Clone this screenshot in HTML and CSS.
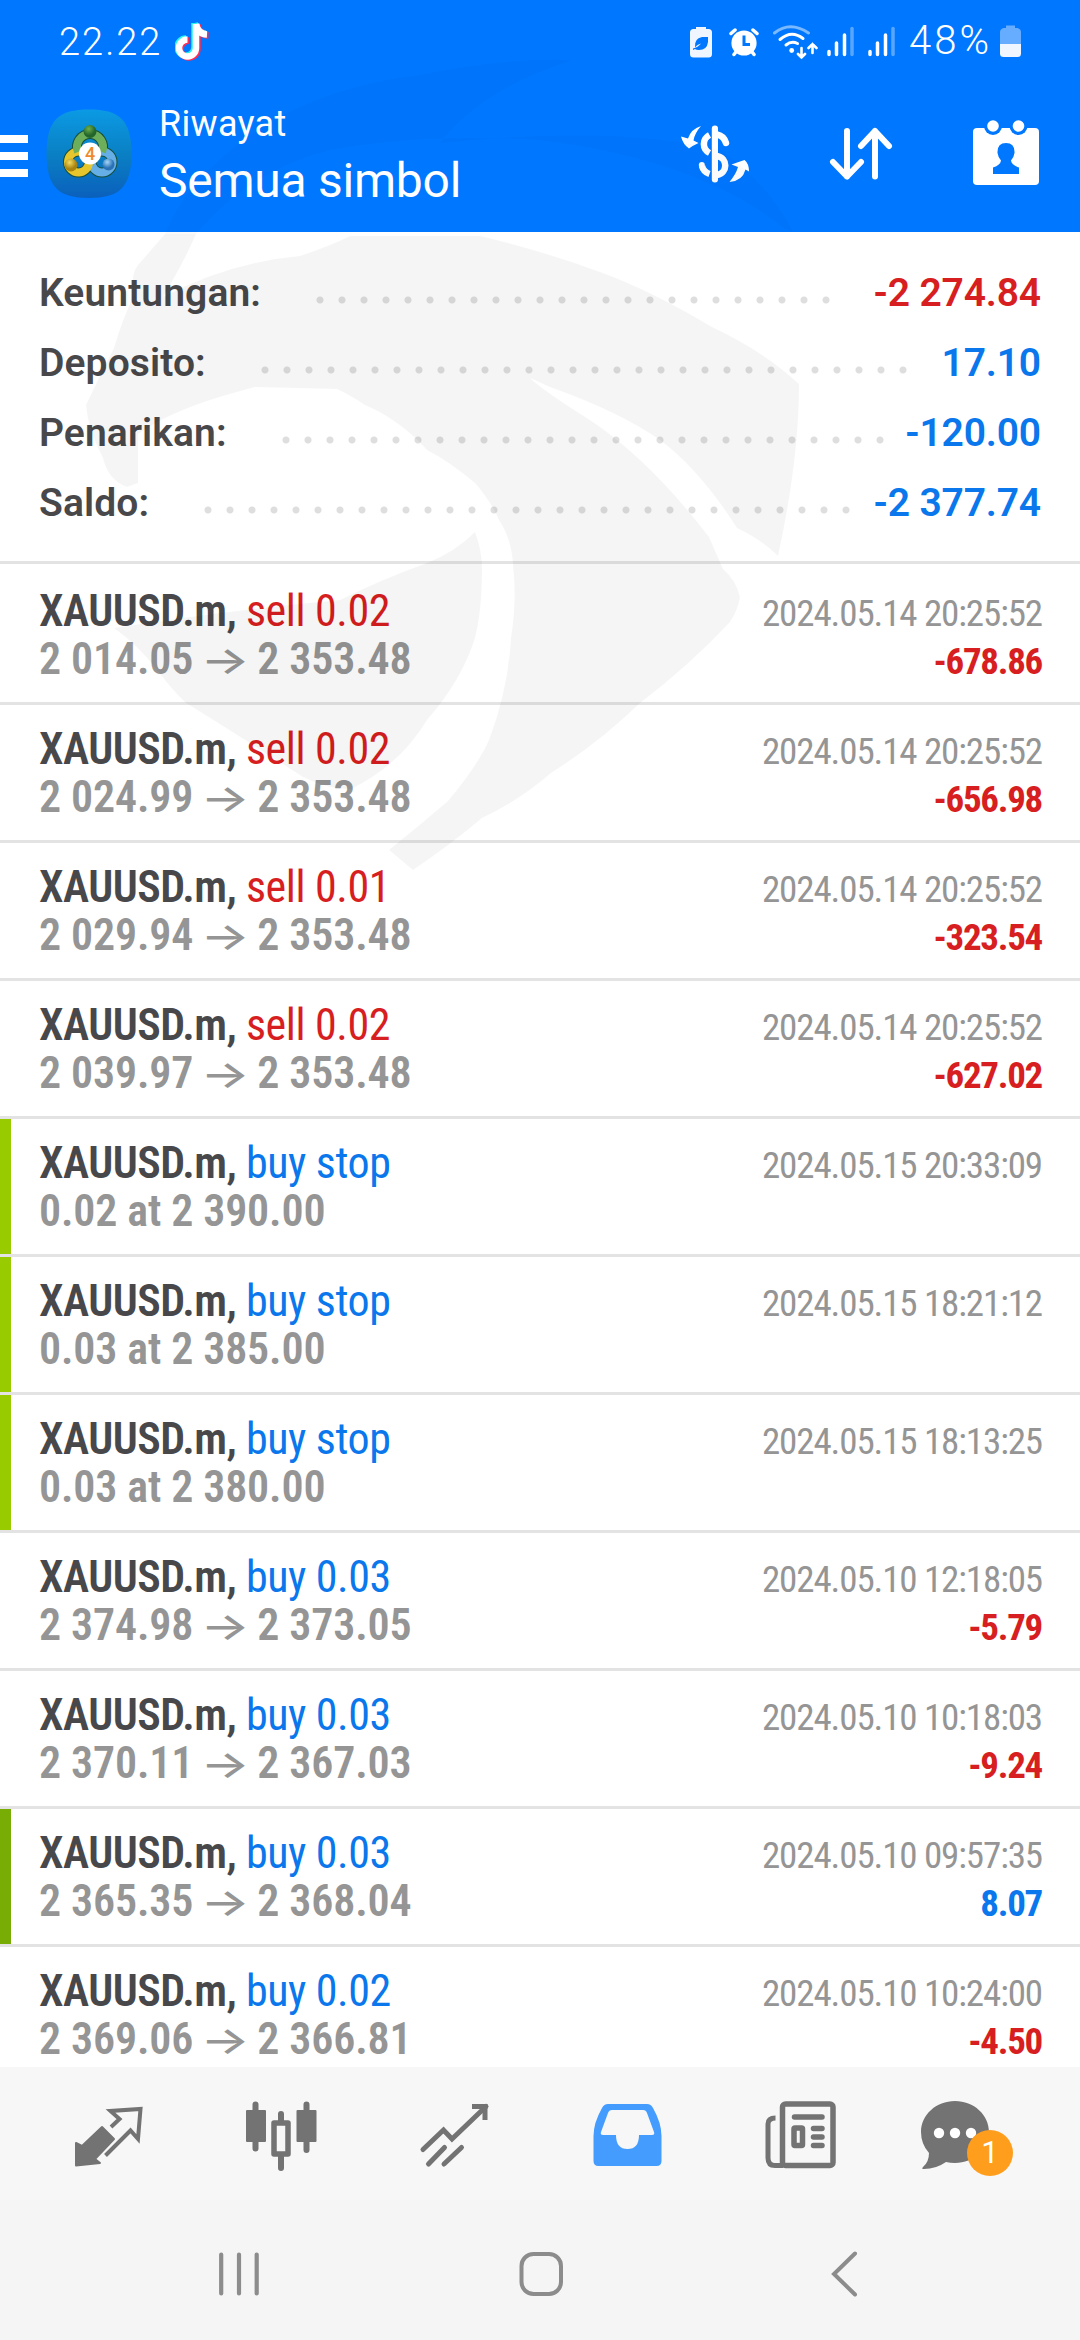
FILE: index.html
```
<!DOCTYPE html>
<html lang="id">
<head>
<meta charset="utf-8">
<title>Riwayat</title>
<link rel="stylesheet" href="styles.css">
</head>
<body>
<div class="screen">
  <header class="header">
    <div class="status">
      <span class="clock">22.22</span>
      <svg class="tiktok" width="34" height="40" viewBox="175 21 34 40" fill="none" stroke-width="6.5">
        <g stroke="#25f4ee" transform="translate(-1.5 -1)"><path d="M196 24V48A8.500 8.500 0 1 1 187.500 39.500"/><path d="M196 24Q198 34 207 34.500"/></g>
        <g stroke="#fe2c55" transform="translate(1.500 1)"><path d="M196 24V48A8.500 8.500 0 1 1 187.500 39.500"/><path d="M196 24Q198 34 207 34.500"/></g>
        <g stroke="#fff"><path d="M196 24V48A8.500 8.500 0 1 1 187.500 39.500"/><path d="M196 24Q198 34 207 34.500"/></g>
      </svg>
      <div class="status-icons">
        <svg width="22" height="34" viewBox="690 24 22 34"><path fill="#f0f6ff" d="M696 29v-2h10v2h2.500q3.500 0 3.500 3.500v21.500q0 3.500-3.500 3.500h-15q-3.500 0-3.500-3.500V32.500q0-3.500 3.500-3.500z"/><path fill="#07f" d="M708 37v5q-1 8-9 8-3 0-4-1l-2 1v-1.500q5-1 8-5-4 1-6 4-1-9 7-10.500z"/></svg>
        <svg class="alarm" width="30" height="34" viewBox="729 24 30 34"><g fill="none" stroke="#fff" stroke-width="3.500" stroke-linecap="round"><path d="M731 33.500l4-3.500M757 33.500l-4-3.500M734 54.500l3-4M754 54.500l-3-4"/></g><circle cx="744" cy="43" r="12.600" fill="#fff"/><path d="M744 35.500v9h6" fill="none" stroke="#07f" stroke-width="3"/></svg>
        <svg class="wifi" width="45" height="36" viewBox="773 24 45 36" fill="none" stroke="#fff" stroke-width="3" stroke-linecap="round"><path stroke="#7ab8ff" d="M774.500 33Q790 20.500 808.500 33"/><path d="M780 39.500Q791.500 29.500 803 38.500M786 45Q791.500 40.500 797.500 43.500"/><circle cx="791.700" cy="50.500" r="2.400" fill="#fff" stroke="none"/><path stroke-width="2.600" d="M801.500 48v8.500M798 54l3.500 3.500 3.500-3.500M812.500 53v-9M808.500 48l4-4 4 4"/></svg>
        <svg class="signal" width="29" height="34" viewBox="826 24 29 34" fill="none" stroke="#fff" stroke-width="3.500" stroke-linecap="round"><path d="M829 51.500v3M836.500 43v11.500M844.500 35v19.500"/><path stroke="#59a6ff" d="M852 28.500v26"/></svg>
        <svg class="signal2" width="29" height="34" viewBox="826 24 29 34" fill="none" stroke="#fff" stroke-width="3.500" stroke-linecap="round"><path d="M829 51.500v3M836.500 43v11.500M844.500 35v19.500"/><path stroke="#59a6ff" d="M852 28.500v26"/></svg>
        <span class="percent">48%</span>
        <svg class="battery" width="22" height="34" viewBox="1000 24 22 34"><path fill="#66adff" d="M1006 28v-2.500h9V28h2.500q3.500 1 3.500 4v12h-21V32q0-3 3.500-4z"/><path fill="#f0f6ff" d="M1000 44h21v9.500q0 3.500-3.500 3.500h-14q-3.500 0-3.500-3.500z"/></svg>
      </div>
    </div>
    <div class="toolbar">
      <div class="menu"><i></i><i></i><i></i></div>
      <svg class="logo" width="86" height="90" viewBox="46 109 86 90">
        <defs>
          <linearGradient id="bg" x1="0" y1="0" x2="0" y2="1"><stop offset="0" stop-color="#0b9ae4"/><stop offset=".5" stop-color="#0a80c4"/><stop offset="1" stop-color="#0a60bc"/></linearGradient>
          <radialGradient id="gr" cx=".4" cy=".3"><stop offset="0" stop-color="#6fb04c"/><stop offset="1" stop-color="#23652a"/></radialGradient>
          <radialGradient id="ye" cx=".4" cy=".3"><stop offset="0" stop-color="#f6dc62"/><stop offset="1" stop-color="#a8830f"/></radialGradient>
          <radialGradient id="bl" cx=".4" cy=".3"><stop offset="0" stop-color="#a5d6f8"/><stop offset="1" stop-color="#2a72b5"/></radialGradient>
        </defs>
        <path fill="url(#bg)" d="M89 109.500c30 0 42.500 10 42.500 44s-12.500 44.500-42.500 44.500-42.500-10.500-42.500-44.500 12.500-44 42.500-44z"/>
        <g fill="none">
          <g stroke="#174f3a" stroke-width="10"><path d="M78 152a13 13 0 1 1 24 0"/><circle cx="78.500" cy="162" r="10.500"/><circle cx="102" cy="162" r="10.500"/></g>
          <circle cx="102" cy="162" r="10.500" stroke="#66aee6" stroke-width="8"/>
          <circle cx="78.500" cy="162" r="10.500" stroke="#e6c62c" stroke-width="8"/>
          <path d="M78 152a13 13 0 1 1 24 0" stroke="#6cae5a" stroke-width="8"/>
        </g>
        <circle cx="90" cy="131.500" r="6.500" fill="url(#gr)"/><circle cx="71" cy="165" r="6.500" fill="url(#ye)"/><circle cx="108.500" cy="164.500" r="6" fill="url(#bl)"/>
        <circle cx="90" cy="153.500" r="11" fill="#fff"/>
        <text x="90" y="160" text-anchor="middle" class="logo-num">4</text>
      </svg>
      <div class="titles"><span class="sup">Riwayat</span><span class="main">Semua simbol</span></div>
      <svg class="act-money" width="72" height="62" viewBox="680 123 72 62">
        <g fill="#fff"><path d="M701 126q-10 3-13 12.500l-7-2q2 8 8 12 4-3 9.500-5.500l-5-2.500q1-7 7.500-14.500zM729.500 182q13-1 16-12.500l3.500 2q0-8-4.500-11.500-6 2-13 4.500l6.500 2.500q-2 7-8.500 15z"/><rect x="711.800" y="125.500" width="6.200" height="57" rx="3"/></g>
        <g fill="none" stroke="#fff" stroke-width="6.500"><path d="M709.500 135C702 139 702 149 709.500 153"/><path stroke-linecap="round" d="M717 134.500q7 1.500 9 8.500"/><path d="M717 156c11 2 11 17 0 19"/><path d="M709.500 174q-6-2-7.500-8" /><circle cx="701.800" cy="165" r="3" fill="#fff" stroke="none"/></g>
      </svg>
      <svg class="act-sort" width="66" height="58" viewBox="828 125 66 58" fill="none" stroke="#fff" stroke-width="6" stroke-linecap="round" stroke-linejoin="round"><path d="M847 131v45.500M833 162l14 14.500L861 162M875 176.500V131M861 146l14-15 14 15"/></svg>
      <svg class="act-cal" width="66" height="68" viewBox="973 119 66 68">
        <path fill="#fff" d="M977 128h58q4 0 4 4v49q0 4-4 4h-58q-4 0-4-4v-49q0-4 4-4z"/>
        <g fill="#07f"><circle cx="993" cy="126" r="9"/><circle cx="1018.500" cy="126" r="9"/><path d="M1006 143q9 0 8.500 10-.5 4-3.500 7.500.500 4.500 8 7v6.500h-26v-6.500q7.500-2.500 8-7-3-3.500-3.500-7.500-.5-10 8.500-10z"/></g>
        <g fill="#fff"><circle cx="993" cy="126" r="5.800"/><circle cx="1018.500" cy="126" r="5.800"/></g>
      </svg>
    </div>
  </header>

  <section class="summary">
    <div class="sum"><span>Keuntungan:</span><i class="dots dots-24"></i><b class="red">-2 274.84</b></div>
    <div class="sum"><span>Deposito:</span><i class="dots dots-30"></i><b class="blue">17.10</b></div>
    <div class="sum"><span>Penarikan:</span><i class="dots dots-28"></i><b class="blue">-120.00</b></div>
    <div class="sum"><span>Saldo:</span><i class="dots dots-30"></i><b class="blue">-2 377.74</b></div>
  </section>

  <main class="list">
    <article class="row"><div class="line"><span class="sym">XAUUSD.m, <em class="red">sell 0.02</em></span><time>2024.05.14 20:25:52</time></div><div class="line"><span class="price">2 014.05 <u>→</u> 2 353.48</span><b class="red">-678.86</b></div></article>
    <article class="row"><div class="line"><span class="sym">XAUUSD.m, <em class="red">sell 0.02</em></span><time>2024.05.14 20:25:52</time></div><div class="line"><span class="price">2 024.99 <u>→</u> 2 353.48</span><b class="red">-656.98</b></div></article>
    <article class="row"><div class="line"><span class="sym">XAUUSD.m, <em class="red">sell 0.01</em></span><time>2024.05.14 20:25:52</time></div><div class="line"><span class="price">2 029.94 <u>→</u> 2 353.48</span><b class="red">-323.54</b></div></article>
    <article class="row"><div class="line"><span class="sym">XAUUSD.m, <em class="red">sell 0.02</em></span><time>2024.05.14 20:25:52</time></div><div class="line"><span class="price">2 039.97 <u>→</u> 2 353.48</span><b class="red">-627.02</b></div></article>
    <article class="row pending"><div class="line"><span class="sym">XAUUSD.m, <em class="blue">buy stop</em></span><time>2024.05.15 20:33:09</time></div><div class="line"><span class="price">0.02 at 2 390.00</span></div></article>
    <article class="row pending"><div class="line"><span class="sym">XAUUSD.m, <em class="blue">buy stop</em></span><time>2024.05.15 18:21:12</time></div><div class="line"><span class="price">0.03 at 2 385.00</span></div></article>
    <article class="row pending"><div class="line"><span class="sym">XAUUSD.m, <em class="blue">buy stop</em></span><time>2024.05.15 18:13:25</time></div><div class="line"><span class="price">0.03 at 2 380.00</span></div></article>
    <article class="row"><div class="line"><span class="sym">XAUUSD.m, <em class="blue">buy 0.03</em></span><time>2024.05.10 12:18:05</time></div><div class="line"><span class="price">2 374.98 <u>→</u> 2 373.05</span><b class="red">-5.79</b></div></article>
    <article class="row"><div class="line"><span class="sym">XAUUSD.m, <em class="blue">buy 0.03</em></span><time>2024.05.10 10:18:03</time></div><div class="line"><span class="price">2 370.11 <u>→</u> 2 367.03</span><b class="red">-9.24</b></div></article>
    <article class="row profit"><div class="line"><span class="sym">XAUUSD.m, <em class="blue">buy 0.03</em></span><time>2024.05.10 09:57:35</time></div><div class="line"><span class="price">2 365.35 <u>→</u> 2 368.04</span><b class="blue">8.07</b></div></article>
    <article class="row"><div class="line"><span class="sym">XAUUSD.m, <em class="blue">buy 0.02</em></span><time>2024.05.10 10:24:00</time></div><div class="line"><span class="price">2 369.06 <u>→</u> 2 366.81</span><b class="red">-4.50</b></div></article>
  </main>

  <nav class="tabs">
    <svg class="tab" viewBox="22 2067 173 133">
      <path fill="#737373" stroke="#737373" stroke-width="2" stroke-linejoin="round" d="M76 2143l6 3 20-19 12 12-19 20 5 4-24 2.500z"/>
      <path fill="none" stroke="#737373" stroke-width="4" d="M111 2127l8.500-8-9-8 30-2-2.500 30-7.500-8.500-25 25"/>
    </svg>
    <svg class="tab" viewBox="195 2067 173 133" stroke="#737373" stroke-width="6" stroke-linecap="round" stroke-linejoin="round" fill="#737373">
      <path d="M255.500 2104.500v44M306.500 2104.500v45.500M281 2114v9M281 2157v11"/>
      <g stroke-width="2"><rect x="247" y="2111" width="18" height="30"/><rect x="297.500" y="2111" width="18" height="30"/></g>
      <rect x="274" y="2123" width="14" height="31" fill="#f7f7f7" stroke-width="5.500"/>
    </svg>
    <svg class="tab" viewBox="368 2067 173 133" fill="none" stroke="#737373" stroke-width="5" stroke-linecap="round">
      <path d="M423 2149.500l20.500-19.500 8.500 9 34-32.500M428.500 2164l16-16.500M444 2164l17.500-16.500"/><path stroke-linecap="square" d="M474.500 2106.500h10.500v11"/>
    </svg>
    <svg class="tab" viewBox="541 2067 173 133">
      <path fill="#459cff" fill-rule="evenodd" d="M608 2104h39q4 0 6 4 8.500 15 8.500 28v25q0 5-5 5h-58q-5 0-5-5v-25q0-13 8.500-28 2-4 6-4zm4 6q-3 0-4 3l-7 19q-1 3 2 3h13q0 14 11.500 14t11.500-14h13q3 0 2-3l-7-19q-1-3-4-3z"/>
    </svg>
    <svg class="tab" viewBox="714 2067 173 133" fill="none" stroke="#737373" stroke-width="5.500" stroke-linecap="round">
      <rect x="782.500" y="2104" width="50.500" height="61.500" rx="3"/><path stroke-width="5" stroke-linecap="butt" d="M775.500 2118q-7.500 0-7.500 6v34q0 7.500 7 7.500h8"/>
      <path d="M794.500 2117h27.500M813.500 2128.500h8.500M813.500 2137h8.500M813.500 2145.500h8.500"/><rect x="794" y="2128" width="8.500" height="17.500" rx="1"/>
    </svg>
    <div class="tab chat">
      <svg viewBox="887 2067 173 133"><path fill="#737373" d="M955 2101c19 0 34 14 34 31s-15 31-34 31q-5 0-9-1-10 7-22 7-3 0-1-2 6-5 6-14-8-9-8-21c0-17 15-31 34-31z"/><g fill="#fff"><circle cx="939" cy="2133" r="5.200"/><circle cx="955" cy="2133" r="5.200"/><circle cx="971" cy="2133" r="5.200"/></g></svg>
      <span class="badge">1</span>
    </div>
  </nav>

  <footer class="system">
    <svg width="48" height="48" viewBox="215 2250 48 48" stroke="#8c8c8c" stroke-width="4.200" stroke-linecap="round"><path d="M221.200 2254.500v39M239 2254.500v39M256.700 2254.500v39"/></svg>
    <svg width="48" height="48" viewBox="517 2250 48 48" fill="none" stroke="#8c8c8c" stroke-width="4"><rect x="521.500" y="2254" width="39.500" height="40" rx="12"/></svg>
    <svg width="48" height="48" viewBox="819 2250 48 48" fill="none" stroke="#8c8c8c" stroke-width="4" stroke-linecap="round"><path d="M855 2253.500L834 2274l21 20.500"/></svg>
  </footer>

  <svg class="watermark" width="1080" height="900" viewBox="0 0 1080 900">
    <path class="on-blue" d="M165 234Q185 180 260 128 330 85 420 75 500 58 572 60 480 90 440 143 620 125 720 150 770 185 793 232L785 229Q700 160 540 140 420 133 330 150 250 170 196 234z"/>
    <path class="on-white" d="M165 234h31Q184 262 163 297 230 262 300 256 330 246 350 236H480Q540 250 600 272 650 290 712 327 765 352 799 384 799 460 778 556 762 540 737 528 700 470 660 440 620 412 550 387 530 378 530 378 545 392 590 420 650 460 709 537L723 569Q736 580 740 597 738 610 730 622 690 665 640 703 600 742 551 773 520 800 482 818 450 845 413 870L389 850Q420 825 448 801 478 765 489 740 508 690 511 638 517 600 513 565 512 540 499 520 490 500 475 483 450 462 427 450 400 420 365 405 350 395 337 389L255 387Q225 395 207 401 165 415 138 434V483L127 487Q108 480 103 458 88 430 86 405 100 375 114 348 122 320 134 295 130 275 138 265z"/>
    <path class="on-white" d="M475 532Q482 550 482 569 482 610 475 638 462 680 427 720 400 765 351 789 330 790 303 777 230 730 186 703 172 690 158 671 138 645 114 628 230 610 340 600 380 580 427 563 455 552 475 532z"/>
  </svg>
</div>
</body>
</html>
```
FILE: styles.css
```
* { box-sizing: border-box; }
body { margin: 0; background: #fff; font-family: Roboto, "Liberation Sans", sans-serif; }
.screen { position: relative; width: 1080px; height: 2340px; display: flex; flex-direction: column; overflow: hidden; }
svg { display: block; flex: none; }
em, i, u { font-style: normal; text-decoration: none; }

.red { color: #d71e20; }
.blue { color: #0a77ec; }

.header { height: 232px; flex: none; background: #0077ff; color: #fff; }
.status { height: 80px; display: flex; align-items: flex-start; padding: 0 58px 0 59px; }
.clock { font-size: 38px; line-height: 44px; padding-top: 20px; width: 116px; letter-spacing: 2px; font-weight: 350; }
.tiktok { margin-top: 21px; }
.status-icons { margin-left: auto; display: flex; align-items: flex-start; }
.status-icons svg { margin-top: 24px; }
.status-icons .alarm { margin-left: 17px; }
.status-icons .wifi { margin-left: 14px; }
.status-icons .signal { margin-left: 8px; }
.status-icons .signal2 { margin-left: 12px; }
.percent { font-size: 40px; line-height: 44px; padding-top: 19px; width: 85px; margin-left: 13px; font-weight: 350; letter-spacing: 3px; white-space: nowrap; }
.status-icons .battery { margin-left: 6px; }

.toolbar { height: 152px; display: flex; align-items: flex-start; }
.menu { width: 28px; padding-top: 55px; display: flex; flex-direction: column; gap: 9px; flex: none; }
.menu i { height: 8px; background: #fff; }
.logo { margin: 29px 0 0 18px; }
.logo-num { font: 500 18px Roboto, sans-serif; fill: #ee8a2c; }
.titles { display: flex; flex-direction: column; margin-left: 27px; white-space: nowrap; }
.sup { font-size: 36px; line-height: 44px; margin-top: 22px; letter-spacing: .3px; }
.main { font-size: 48px; line-height: 56px; margin-top: 7px; letter-spacing: -.25px; }
.act-money { margin: 43px 0 0 auto; }
.act-sort { margin: 45px 0 0 76px; }
.act-cal { margin: 39px 41px 0 79px; }

.summary { height: 332px; flex: none; padding: 26px 39px 0; border-bottom: 3px solid #e3e3e3; }
.sum { height: 70px; line-height: 70px; font-size: 39px; font-weight: 600; color: #48484b; display: flex; }
.sum span { letter-spacing: .1px; }
.sum b { margin-left: auto; font-weight: 600; letter-spacing: -.15px; }
.dots { height: 8px; margin: 38px 0 0 55px; background: radial-gradient(circle at 4px 4px, #dedede 3px, transparent 4px) 0 0 / 22px 8px repeat-x; }
.dots-24 { width: 528px; }
.dots-28 { width: 616px; }
.dots-30 { width: 660px; }

.list { flex: 1; min-height: 0; overflow: hidden; padding-top: 3px; }
.row { height: 138px; padding: 20px 39px 0; border-bottom: 3px solid #e3e3e3; font-family: "Roboto Condensed", Roboto, sans-serif; position: relative; }
.row.pending::before, .row.profit::before { content: ""; position: absolute; left: 0; top: 0; width: 11px; height: 135px; background: #99cc00; }
.row.profit::before { background: #77ad04; }
.line { display: flex; justify-content: space-between; height: 48px; line-height: 48px; align-items: baseline; white-space: nowrap; }
.sym { font-size: 44px; font-weight: 600; color: #48484b; letter-spacing: -.5px; }
.sym em { font-weight: 400; letter-spacing: -.4px; }
.price { font-size: 44px; font-weight: 600; color: #959595; letter-spacing: -.15px; }
.price u { display: inline-block; font-family: Inter, sans-serif; font-size: 38px; font-weight: 500; line-height: 40px; margin: 0 4px; transform: scaleX(1.36); }
time { font-size: 37px; color: #959595; letter-spacing: -1.1px; margin-right: -1px; }
.line b { font-size: 37px; font-weight: 700; letter-spacing: -1.3px; margin-right: -1px; }

.tabs { height: 133px; flex: none; background: #f7f7f7; display: flex; padding-left: 22px; }
.tab { width: 173px; height: 133px; }
.chat { position: relative; }
.badge { position: absolute; left: 80px; top: 63px; width: 46px; height: 46px; border-radius: 50%; background: #ff9d1c; color: #fff; font-size: 31px; line-height: 46px; text-align: center; }
.system { height: 140px; flex: none; background: #f5f5f5; display: flex; gap: 254px; padding: 50px 0 0 215px; }

.watermark { position: absolute; left: 0; top: 0; pointer-events: none; }
.on-white { fill: rgba(0, 0, 0, .04); }
.on-blue { fill: rgba(0, 0, 0, .02); }
```
